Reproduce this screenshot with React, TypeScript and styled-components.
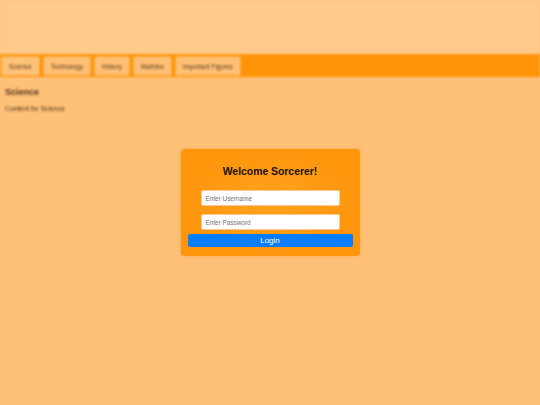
import React, { useState } from 'react';
import styled, { createGlobalStyle } from 'styled-components';

const GlobalStyle = createGlobalStyle`
  html, body {
    margin: 0;
    padding: 0;
    background: #ffc078;
    font-family: "Liberation Sans", Arial, sans-serif;
  }
`;

const Page = styled.div`
  position: relative;
  width: 540px;
  height: 405px;
  overflow: hidden;
  background: #ffc078;
`;

const Backdrop = styled.div`
  filter: blur(1.2px);
`;

const Header = styled.header`
  height: 54px;
  background: #ffc98c;
`;

const TabBar = styled.nav`
  display: flex;
  align-items: stretch;
  gap: 3px;
  height: 23px;
  padding: 2px 1px 1px;
  box-sizing: border-box;
  background: #ff9408;
`;

const Tab = styled.button<{ $active?: boolean }>`
  flex-shrink: 0;
  padding: 0 7px;
  border: 1px solid #ffaa3c;
  border-radius: 2px;
  background: ${(p) => (p.$active ? '#ffc279' : '#ffbf74')};
  color: #5a3c1a;
  font-family: inherit;
  font-size: 6.4px;
  white-space: nowrap;
  cursor: pointer;
`;

const Content = styled.section`
  padding: 10px 5px;
  color: #4e3416;
`;

const Heading = styled.h2`
  margin: 0 0 8px;
  font-size: 9px;
  font-weight: bold;
`;

const Text = styled.p`
  margin: 0;
  font-size: 6.8px;
`;

const Overlay = styled.div`
  position: absolute;
  inset: 0;
  display: flex;
  align-items: flex-start;
  justify-content: center;
  padding-top: 149px;
`;

const Modal = styled.form`
  width: 179px;
  box-sizing: border-box;
  padding: 17px 7px 9px;
  border-radius: 4px;
  background: radial-gradient(ellipse at 50% 50%, #ffa21e 0%, #ff960c 70%);
  display: flex;
  flex-direction: column;
  align-items: center;
  box-shadow: 0 0 3px rgba(255, 150, 20, 0.5);
`;

const Title = styled.h1`
  margin: 0 0 13px;
  font-size: 10.4px;
  font-weight: bold;
  color: #1a1108;
`;

const Field = styled.input`
  width: 139px;
  height: 16px;
  box-sizing: border-box;
  margin-bottom: 8px;
  padding: 0 4px;
  border: 1px solid #ffc890;
  border-radius: 2px;
  background: #fff;
  font-family: inherit;
  font-size: 6.4px;
  color: #333;

  &::placeholder {
    color: #757575;
  }

  &:last-of-type {
    margin-bottom: 4px;
  }
`;

const LoginButton = styled.button`
  width: 100%;
  height: 13px;
  padding: 0;
  border: none;
  border-radius: 2px;
  background: #0a7cff;
  color: #fff;
  font-family: inherit;
  font-size: 8px;
  line-height: 13px;
  cursor: pointer;
`;

const tabs = ['Science', 'Technology', 'History', 'Marbles', 'Important Figures'];

export default function App() {
  const [active, setActive] = useState('Science');

  return (
    <Page>
      <GlobalStyle />
      <Backdrop>
        <Header />
        <TabBar>
          {tabs.map((t) => (
            <Tab key={t} $active={t === active} onClick={() => setActive(t)}>
              {t}
            </Tab>
          ))}
        </TabBar>
        <Content>
          <Heading>{active}</Heading>
          <Text>Content for {active}</Text>
        </Content>
      </Backdrop>
      <Overlay>
        <Modal onSubmit={(e) => e.preventDefault()}>
          <Title>Welcome Sorcerer!</Title>
          <Field placeholder="Enter Username" />
          <Field type="password" placeholder="Enter Password" />
          <LoginButton type="submit">Login</LoginButton>
        </Modal>
      </Overlay>
    </Page>
  );
}
